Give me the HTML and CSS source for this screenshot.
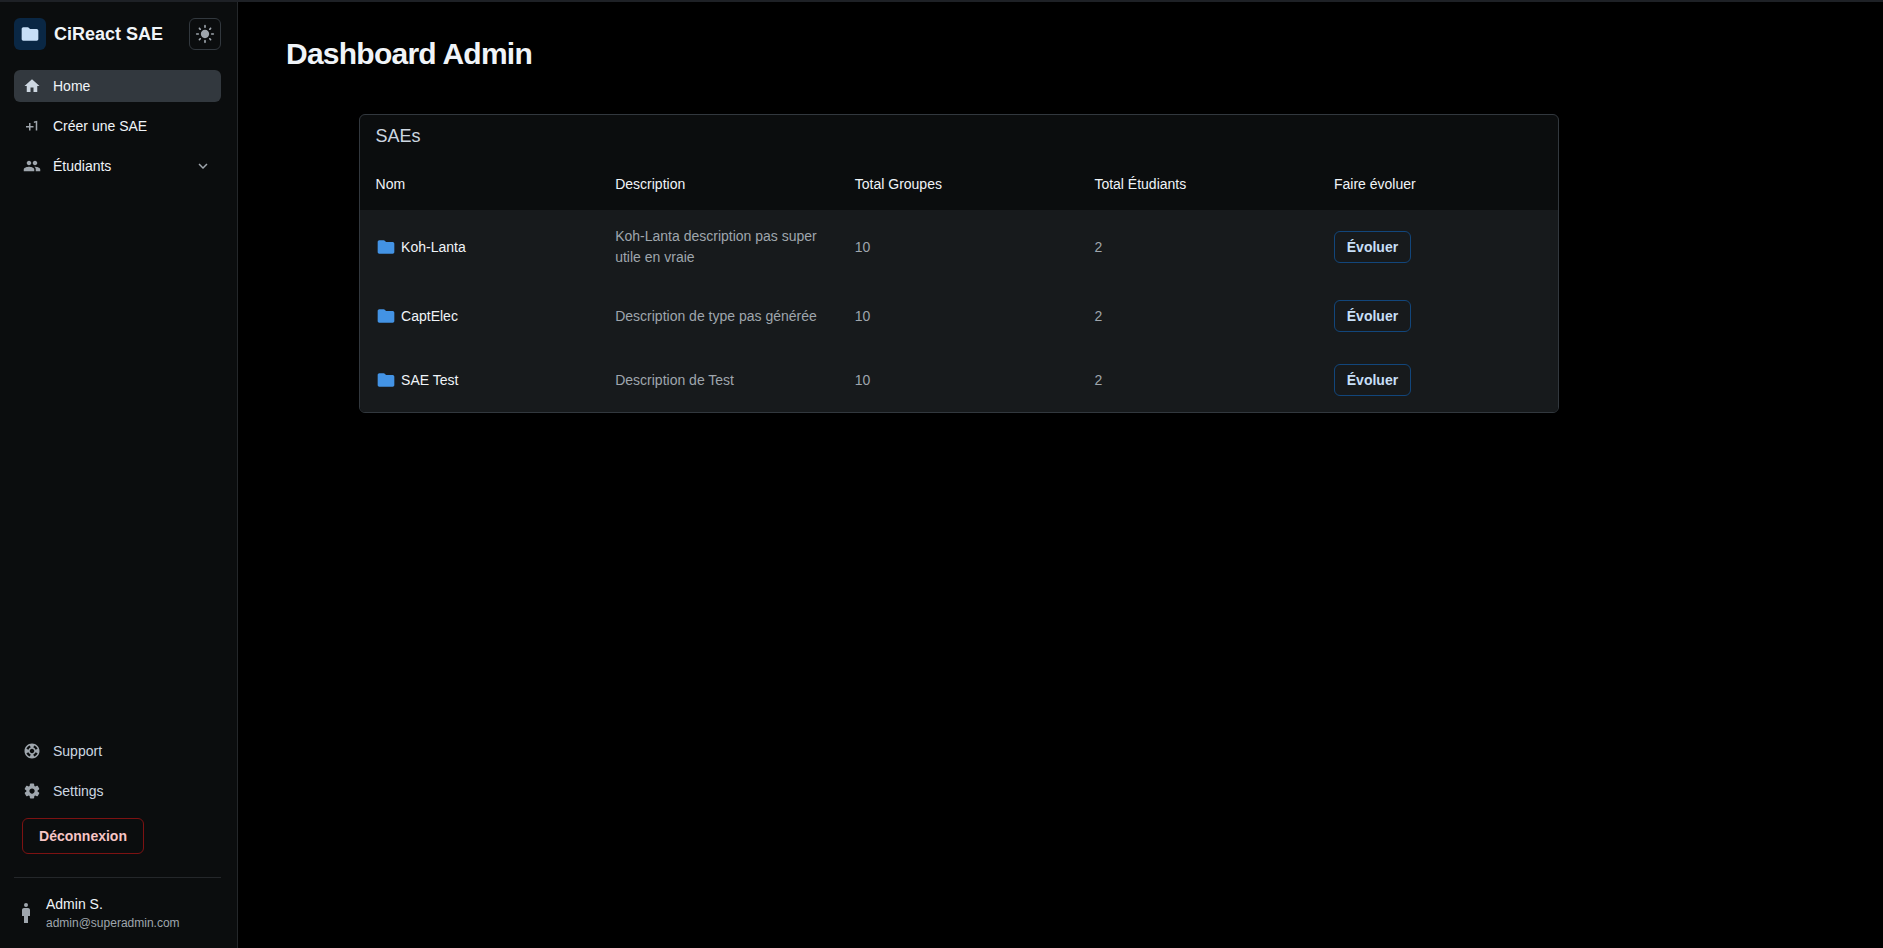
FILE: index.html
```html
<!DOCTYPE html>
<html lang="fr">
<head>
<meta charset="utf-8">
<title>Dashboard Admin</title>
<link rel="stylesheet" href="styles.css">
</head>
<body>
<div class="topline"></div>
<div class="app">
  <aside class="sidebar">
    <div class="brand">
      <span class="logo"><svg viewBox="0 0 24 24"><path d="M20 6h-8l-1.41-1.41C10.21 4.21 9.7 4 9.17 4H4c-1.1 0-1.99.9-1.99 2L2 18c0 1.1.9 2 2 2h16c1.1 0 2-.9 2-2V8c0-1.1-.9-2-2-2"/></svg></span>
      <span class="brand-name">CiReact SAE</span>
      <button class="theme-btn" type="button"><svg viewBox="0 0 24 24"><path d="M12 7c-2.76 0-5 2.24-5 5s2.24 5 5 5 5-2.24 5-5-2.24-5-5-5M2 13h2c.55 0 1-.45 1-1s-.45-1-1-1H2c-.55 0-1 .45-1 1s.45 1 1 1m18 0h2c.55 0 1-.45 1-1s-.45-1-1-1h-2c-.55 0-1 .45-1 1s.45 1 1 1M11 2v2c0 .55.45 1 1 1s1-.45 1-1V2c0-.55-.45-1-1-1s-1 .45-1 1m0 18v2c0 .55.45 1 1 1s1-.45 1-1v-2c0-.55-.45-1-1-1s-1 .45-1 1M5.99 4.58c-.39-.39-1.03-.39-1.41 0-.39.39-.39 1.03 0 1.41l1.06 1.06c.39.39 1.03.39 1.41 0s.39-1.03 0-1.41zm12.37 12.37c-.39-.39-1.03-.39-1.41 0-.39.39-.39 1.03 0 1.41l1.06 1.06c.39.39 1.03.39 1.41 0 .39-.39.39-1.03 0-1.41zm1.06-10.96c.39-.39.39-1.03 0-1.41-.39-.39-1.03-.39-1.41 0l-1.06 1.06c-.39.39-.39 1.03 0 1.41s1.03.39 1.41 0zM7.05 18.36c.39-.39.39-1.03 0-1.41-.39-.39-1.03-.39-1.41 0l-1.06 1.06c-.39.39-.39 1.03 0 1.41s1.03.39 1.41 0z"/></svg></button>
    </div>
    <nav class="nav">
      <a class="nav-item selected"><svg class="nav-icon" viewBox="0 0 24 24"><path d="M10 20v-6h4v6h5v-8h3L12 3 2 12h3v8z"/></svg><span>Home</span></a>
      <a class="nav-item"><svg class="nav-icon" viewBox="0 0 24 24"><path d="M10 8H8v4H4v2h4v4h2v-4h4v-2h-4zm4.5-1.92V7.9l2.5-.5V18h2V5z"/></svg><span>Créer une SAE</span></a>
      <a class="nav-item"><svg class="nav-icon" viewBox="0 0 24 24"><path d="M16 11c1.66 0 2.99-1.34 2.99-3S17.66 5 16 5s-3 1.34-3 3 1.34 3 3 3m-8 0c1.66 0 2.99-1.34 2.99-3S9.66 5 8 5 5 6.34 5 8s1.34 3 3 3m0 2c-2.33 0-7 1.17-7 3.5V19h14v-2.5c0-2.33-4.67-3.5-7-3.5m8 0c-.29 0-.62.02-.97.05 1.16.84 1.97 1.97 1.97 3.45V19h6v-2.5c0-2.33-4.67-3.5-7-3.5"/></svg><span class="grow">Étudiants</span><svg class="chevron" viewBox="0 0 24 24"><path d="M7.41 8.59 12 13.17l4.59-4.58L18 10l-6 6-6-6z"/></svg></a>
    </nav>
    <div class="spacer"></div>
    <nav class="nav bottom-nav">
      <a class="nav-item muted"><svg class="nav-icon" viewBox="0 0 24 24"><path d="M12 2C6.48 2 2 6.48 2 12s4.48 10 10 10 10-4.48 10-10S17.52 2 12 2m7.46 7.12-2.78 1.15c-.51-1.36-1.58-2.44-2.95-2.94l1.15-2.78c2.1.8 3.77 2.47 4.58 4.57M12 15c-1.66 0-3-1.34-3-3s1.34-3 3-3 3 1.34 3 3-1.34 3-3 3M9.13 4.54l1.17 2.78c-1.38.5-2.47 1.59-2.98 2.97L4.54 9.13c.81-2.11 2.48-3.78 4.59-4.59M4.54 14.87l2.78-1.15c.51 1.38 1.59 2.46 2.97 2.96l-1.17 2.78c-2.1-.81-3.77-2.48-4.58-4.59m10.34 4.59-1.15-2.78c1.37-.51 2.45-1.59 2.95-2.97l2.78 1.17c-.81 2.1-2.48 3.77-4.58 4.58"/></svg><span>Support</span></a>
      <a class="nav-item muted"><svg class="nav-icon" viewBox="0 0 24 24"><path d="M19.5 12c0-.23-.01-.45-.03-.68l1.86-1.41c.4-.3.51-.86.26-1.3l-1.87-3.23c-.25-.44-.79-.62-1.25-.42l-2.15.91c-.37-.26-.76-.49-1.17-.68l-.29-2.31c-.06-.5-.49-.88-.99-.88h-3.73c-.51 0-.94.38-1 .88l-.29 2.31c-.41.19-.8.42-1.17.68l-2.15-.91c-.46-.2-1-.02-1.25.42L2.41 8.62c-.25.44-.14.99.26 1.3l1.86 1.41c-.02.22-.03.44-.03.67s.01.45.03.68l-1.86 1.41c-.4.3-.51.86-.26 1.3l1.87 3.23c.25.44.79.62 1.25.42l2.15-.91c.37.26.76.49 1.17.68l.29 2.31c.06.5.49.88.99.88h3.73c.5 0 .93-.38.99-.88l.29-2.31c.41-.19.8-.42 1.17-.68l2.15.91c.46.2 1 .02 1.25-.42l1.87-3.23c.25-.44.14-.99-.26-1.3l-1.86-1.41c.03-.23.04-.45.04-.68m-7.46 3.5c-1.93 0-3.5-1.57-3.5-3.5s1.57-3.5 3.5-3.5 3.5 1.57 3.5 3.5-1.57 3.5-3.5 3.5"/></svg><span>Settings</span></a>
      <button class="logout" type="button">Déconnexion</button>
    </nav>
    <div class="divider"></div>
    <div class="user">
      <svg class="user-icon" viewBox="0 0 24 24"><circle cx="12" cy="4" r="2"/><path d="M14 7h-4c-1.1 0-2 .9-2 2v6h2v7h4v-7h2V9c0-1.1-.9-2-2-2"/></svg>
      <div class="user-text">
        <div class="user-name">Admin S.</div>
        <div class="user-mail">admin@superadmin.com</div>
      </div>
    </div>
  </aside>
  <main class="main">
    <h1 class="title">Dashboard Admin</h1>
    <section class="card">
      <h2 class="card-title">SAEs</h2>
      <table class="table">
        <thead>
          <tr><th>Nom</th><th>Description</th><th>Total Groupes</th><th>Total Étudiants</th><th>Faire évoluer</th></tr>
        </thead>
        <tbody>
          <tr>
            <td><span class="name"><svg class="folder" viewBox="0 0 24 24"><path d="M20 6h-8l-1.41-1.41C10.21 4.21 9.7 4 9.17 4H4c-1.1 0-1.99.9-1.99 2L2 18c0 1.1.9 2 2 2h16c1.1 0 2-.9 2-2V8c0-1.1-.9-2-2-2"/></svg>Koh-Lanta</span></td>
            <td>Koh-Lanta description pas super utile en vraie</td><td>10</td><td>2</td>
            <td><button class="evolve" type="button">Évoluer</button></td>
          </tr>
          <tr>
            <td><span class="name"><svg class="folder" viewBox="0 0 24 24"><path d="M20 6h-8l-1.41-1.41C10.21 4.21 9.7 4 9.17 4H4c-1.1 0-1.99.9-1.99 2L2 18c0 1.1.9 2 2 2h16c1.1 0 2-.9 2-2V8c0-1.1-.9-2-2-2"/></svg>CaptElec</span></td>
            <td>Description de type pas générée</td><td>10</td><td>2</td>
            <td><button class="evolve" type="button">Évoluer</button></td>
          </tr>
          <tr>
            <td><span class="name"><svg class="folder" viewBox="0 0 24 24"><path d="M20 6h-8l-1.41-1.41C10.21 4.21 9.7 4 9.17 4H4c-1.1 0-1.99.9-1.99 2L2 18c0 1.1.9 2 2 2h16c1.1 0 2-.9 2-2V8c0-1.1-.9-2-2-2"/></svg>SAE Test</span></td>
            <td>Description de Test</td><td>10</td><td>2</td>
            <td><button class="evolve" type="button">Évoluer</button></td>
          </tr>
        </tbody>
      </table>
    </section>
  </main>
</div>
</body>
</html>
```
FILE: styles.css
```css
* { box-sizing: border-box; }
html, body { margin: 0; height: 100%; }
body {
  background: #000;
  color: #f0f4f8;
  font-family: "Liberation Sans", Arial, sans-serif;
  font-size: 14px;
  line-height: 21px;
  overflow: hidden;
  display: flex;
  flex-direction: column;
}
.topline { height: 2px; background: #1e2126; flex: none; }
.app { display: flex; flex: 1; min-height: 0; }
.sidebar {
  width: 238px;
  flex: none;
  background: #0b0d0e;
  border-right: 1px solid #24272a;
  padding: 16px 16px 15px 14px;
  display: flex;
  flex-direction: column;
}
.brand { display: flex; align-items: center; gap: 8px; height: 32px; margin-bottom: 20px; }
.logo {
  width: 32px; height: 32px; border-radius: 6px; background: #0a2744;
  display: flex; align-items: center; justify-content: center;
}
.logo svg { width: 20px; height: 20px; fill: #c7dff7; }
.brand-name { flex: 1; font-size: 18px; font-weight: 700; color: #f0f4f8; }
.theme-btn {
  width: 32px; height: 32px; padding: 0; border: 1px solid #32383e; border-radius: 6px;
  background: transparent; display: flex; align-items: center; justify-content: center;
}
.theme-btn svg { width: 20px; height: 20px; fill: #9fa6ad; }
.nav { display: flex; flex-direction: column; gap: 8px; }
.nav-item {
  height: 32px; display: flex; align-items: center; gap: 12px;
  padding: 0 9px 0 9px; border-radius: 6px; color: #f0f4f8;
}
.nav-item.selected { background: #32383e; }
.nav-item.selected .nav-icon { fill: #cdd7e1; }
.nav-item.muted { color: #cdd7e1; }
.nav-icon { width: 18px; height: 18px; fill: #9fa6ad; flex: none; }
.grow { flex: 1; }
.chevron { width: 18px; height: 18px; fill: #9fa6ad; flex: none; }
.spacer { flex: 1; }
.logout {
  align-self: flex-start; margin: 3px 0 0 8px; width: 122px; height: 36px;
  font: 700 14px/21px "Liberation Sans", Arial, sans-serif;
  color: #f7c5c5; background: transparent; border: 1px solid #7d1212; border-radius: 6px; padding: 0;
}
.divider { height: 1px; background: #24272a; margin: 23px 0 14px; }
.user { display: flex; align-items: center; gap: 8px; height: 41px; }
.user-icon { width: 24px; height: 24px; fill: #9fa6ad; flex: none; }
.user-name { font-size: 14px; line-height: 20px; color: #f0f4f8; }
.user-mail { font-size: 12px; line-height: 18px; color: #9fa6ad; }
.main { flex: 1; padding: 32px 48px 0; min-width: 0; }
.title {
  margin: 0 0 40px; font-size: 30px; line-height: 40px; font-weight: 700;
  letter-spacing: -0.75px; color: #f0f4f8;
}
.card {
  width: 1200px; margin-left: 72.6px; background: #0b0d0e; border: 1px solid #32383e;
  border-radius: 6px; overflow: hidden;
}
.card-title { margin: 0; padding: 8px 16px; font-size: 18px; line-height: 27px; font-weight: 400; color: #cdd7e1; }
.table { width: 100%; table-layout: fixed; border-collapse: collapse; }
th {
  height: 52px; padding: 0 16px; text-align: left; font-weight: 400; font-size: 14px; color: #f0f4f8;
}
td {
  padding: 16px; font-size: 14px; line-height: 21px; color: #9fa6ad; background: #171a1c; vertical-align: middle;
}
.name { display: flex; align-items: center; gap: 5.5px; color: #f0f4f8; }
.folder { width: 20px; height: 20px; fill: #4393e4; flex: none; }
.evolve {
  display: block; width: 77px; height: 32px; padding: 0; background: transparent;
  border: 1px solid #12467b; border-radius: 6px; color: #c7dff7;
  font: 700 14px/21px "Liberation Sans", Arial, sans-serif;
}
```
